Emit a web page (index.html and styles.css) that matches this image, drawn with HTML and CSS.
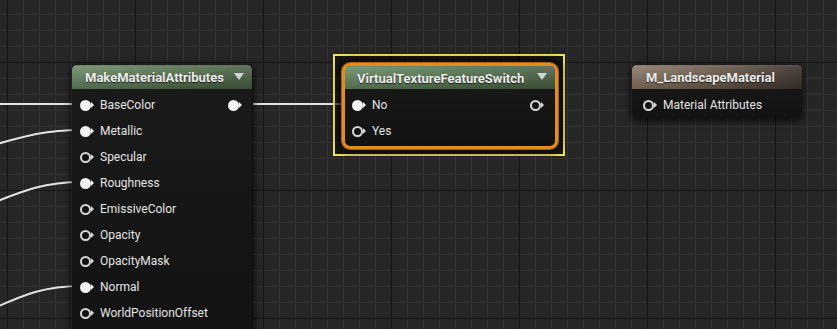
FILE: index.html
```html
<!doctype html>
<html lang="en">
    <head>
        <meta charset="UTF-8" />
        <title>Material Graph</title>
        <link rel="stylesheet" href="styles.css">
    </head>
    <body>
        <div class="graph">
            <svg class="wires" width="837" height="329" viewBox="0 0 837 329">
                <path d="M0 104 H82" />
                <path d="M-10 146 C25 136, 45 130, 82 130" />
                <path d="M-10 204 C25 190, 45 182, 82 182" />
                <path d="M-10 310 C25 294, 45 286, 82 286" />
                <path d="M238 104 H354" />
            </svg>

            <!-- MakeMaterialAttributes -->
            <div class="node node-attrs">
                <div class="header green">
                    <span class="title">MakeMaterialAttributes</span>
                    <span class="arrow"></span>
                </div>
                <div class="body">
                    <div class="row">
                        <span class="pin filled"></span>
                        <span class="label">BaseColor</span>
                        <span class="pin filled out"></span>
                    </div>
                    <div class="row"><span class="pin filled"></span><span class="label">Metallic</span></div>
                    <div class="row"><span class="pin"></span><span class="label">Specular</span></div>
                    <div class="row"><span class="pin filled"></span><span class="label">Roughness</span></div>
                    <div class="row"><span class="pin"></span><span class="label">EmissiveColor</span></div>
                    <div class="row"><span class="pin"></span><span class="label">Opacity</span></div>
                    <div class="row"><span class="pin"></span><span class="label">OpacityMask</span></div>
                    <div class="row"><span class="pin filled"></span><span class="label">Normal</span></div>
                    <div class="row"><span class="pin"></span><span class="label">WorldPositionOffset</span></div>
                </div>
            </div>

            <!-- VirtualTextureFeatureSwitch (selected) -->
            <div class="selection"></div>
            <div class="node node-switch">
                <div class="header green">
                    <span class="title">VirtualTextureFeatureSwitch</span>
                    <span class="arrow"></span>
                </div>
                <div class="body">
                    <div class="row">
                        <span class="pin filled"></span>
                        <span class="label">No</span>
                        <span class="pin out"></span>
                    </div>
                    <div class="row"><span class="pin"></span><span class="label">Yes</span></div>
                </div>
            </div>

            <!-- M_LandscapeMaterial -->
            <div class="node node-result">
                <div class="header brown">
                    <span class="title">M_LandscapeMaterial</span>
                </div>
                <div class="body">
                    <div class="row"><span class="pin"></span><span class="label">Material Attributes</span></div>
                </div>
            </div>
        </div>
    </body>
</html>
```

FILE: styles.css
```css
body {
    margin: 0;
    background: #262626;
    font-family: Roboto, "Liberation Sans", sans-serif;
}
.graph {
    position: relative;
    width: 837px;
    height: 329px;
    overflow: hidden;
    background-color: #262626;
    background-image:
        linear-gradient(to right, #141414 1px, transparent 1px),
        linear-gradient(to bottom, #141414 1px, transparent 1px),
        linear-gradient(to right, #343434 1px, transparent 1px),
        linear-gradient(to bottom, #343434 1px, transparent 1px);
    background-size: 128px 128px, 128px 128px, 16px 16px, 16px 16px;
    background-position: 7px 62px, 7px 62px, 7px 14px, 7px 14px;
}
.wires {
    position: absolute;
    left: 0;
    top: 0;
}
.wires path {
    fill: none;
    stroke: #e4e4e4;
    stroke-width: 2;
}

/* nodes */
.node {
    position: absolute;
    box-sizing: border-box;
    background: linear-gradient(180deg, #1a1a1a, #121212);
    border-radius: 6px;
    box-shadow: 0 2px 6px 2px rgba(0, 0, 0, 0.55);
    color: #e8e8e8;
}
.node-attrs {
    left: 72px;
    top: 65px;
    width: 181px;
    height: 300px;
    border-right: 1px solid #0c0c0c;
}
.node-switch {
    left: 342px;
    top: 63px;
    width: 216px;
    height: 86px;
    border: 3px solid #e38d1c;
    border-radius: 8px;
    box-shadow: 0 0 0 1px #a8600c, 0 0 6px 4px rgba(0, 0, 0, 0.6);
}
.node-result {
    left: 632px;
    top: 65px;
    width: 170px;
    height: 53px;
}
.selection {
    position: absolute;
    left: 333px;
    top: 54px;
    width: 232px;
    height: 102px;
    box-sizing: border-box;
    border: 2px solid #eee25c;
    background: rgba(10, 10, 10, 0.55);
}

.header {
    display: flex;
    align-items: center;
    height: 24px;
    border-radius: 5px 5px 0 0;
    padding: 0 8px 0 13px;
    border-top: 1px solid rgba(255, 255, 255, 0.2);
    box-sizing: border-box;
}
.node-switch .header {
    height: 23px;
    padding-left: 12px;
    border-radius: 4px 4px 0 0;
}
.node-result .header {
    padding-left: 14px;
}
.green {
    background:
        linear-gradient(180deg, rgba(255, 255, 255, 0.1), rgba(0, 0, 0, 0.25)),
        linear-gradient(90deg, #6e8e68, #56744f 60%, #4c6447);
}
.brown {
    background:
        linear-gradient(180deg, rgba(255, 255, 255, 0.08), rgba(0, 0, 0, 0.25)),
        linear-gradient(90deg, #927f6c, #6c5c4d 55%, #3e3630);
}
.title {
    font-size: 13px;
    font-weight: bold;
    color: #ececec;
    text-shadow: 0 1px 1px rgba(0, 0, 0, 0.7);
    white-space: nowrap;
}
.arrow {
    margin-left: auto;
    margin-top: -3px;
    border-left: 5px solid transparent;
    border-right: 5px solid transparent;
    border-top: 7px solid #d4d4d4;
}

.body {
    padding-top: 3px;
}
.row {
    display: flex;
    align-items: center;
    height: 26px;
    padding: 0 9px 0 8px;
}
.node-switch .row {
    padding: 0 10px 0 7px;
}
.node-result .row {
    padding-left: 11px;
}
.label {
    margin-left: 5px;
    font-size: 12px;
    color: #e4e4e4;
    white-space: nowrap;
}

/* pins */
.pin {
    position: relative;
    flex: none;
    width: 11px;
    height: 11px;
    box-sizing: border-box;
    border: 2px solid #d8d8d8;
    border-radius: 50%;
    background: #121212;
    margin-right: 4px;
}
.pin::after {
    content: "";
    position: absolute;
    left: 9px;
    top: 0.5px;
    border-top: 3px solid transparent;
    border-bottom: 3px solid transparent;
    border-left: 3px solid #d8d8d8;
}
.pin.filled {
    background: #f2f2f2;
    border-color: #f2f2f2;
}
.pin.filled::after {
    border-left-color: #f2f2f2;
}
.pin.out {
    margin-left: auto;
}
```
